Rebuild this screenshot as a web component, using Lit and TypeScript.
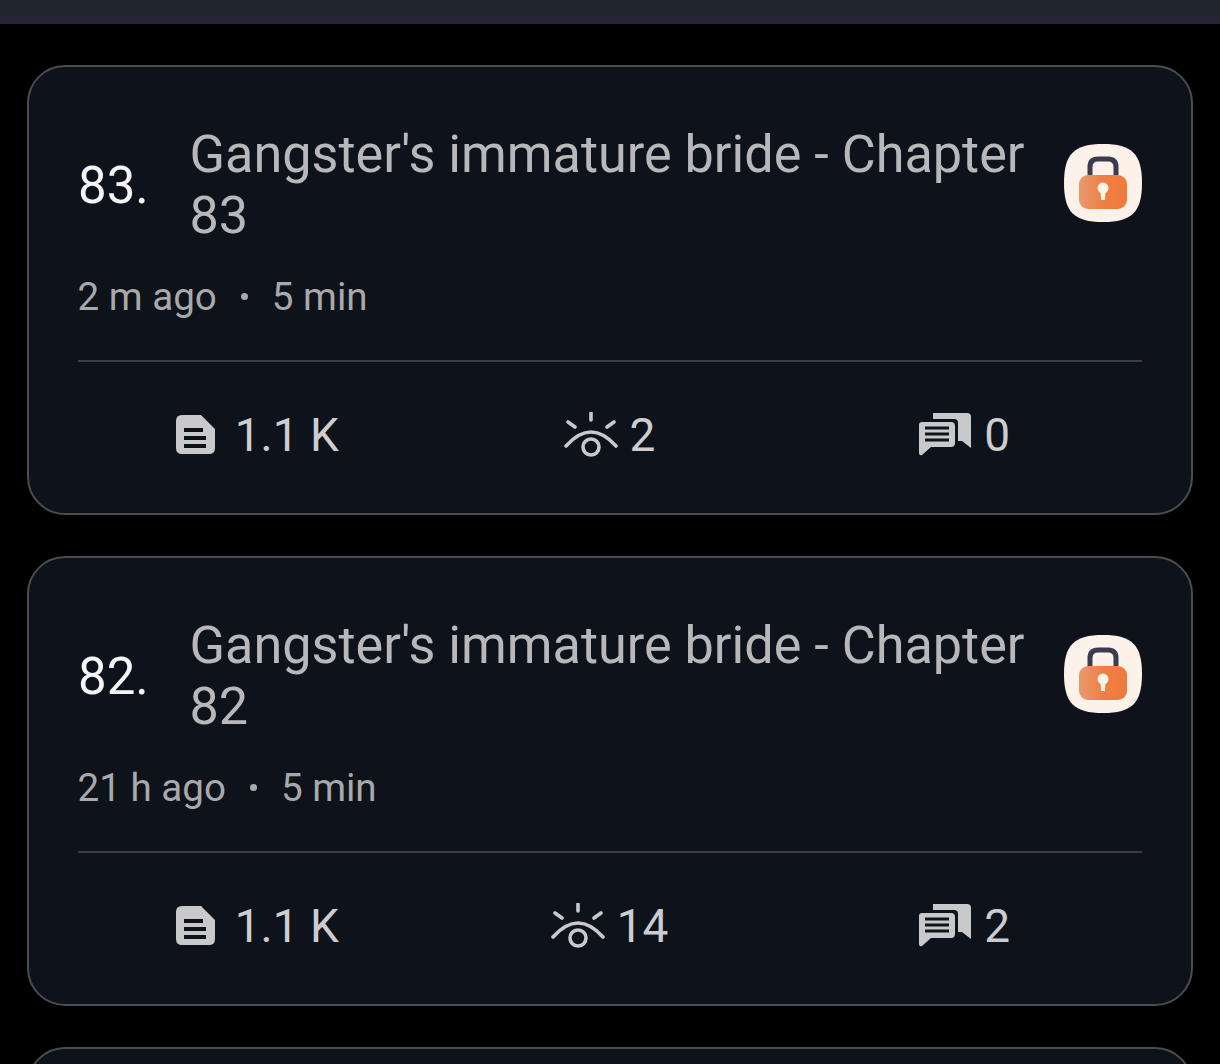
import { LitElement, html, css, svg } from "lit";
import { customElement } from "lit/decorators.js";

const chapters = [
  { n: 83, meta: "2 m ago", views: "2", comments: "0" },
  { n: 82, meta: "21 h ago", views: "14", comments: "2" },
];

const pageIcon = svg`<path fill="#c9c9cb" fill-rule="evenodd" d="M7 0H26L40 14V33Q40 39 34 39H7Q1 39 1 33V6Q1 0 7 0ZM9 13V17H28V13ZM9 21V25H31V21ZM9 29V33H31V29Z"/>`;

const eyeIcon = svg`<g fill="none" stroke="#c9c9cb" stroke-width="3.6" stroke-linecap="round">
  <path d="M2 34Q27 6 52 34" /><circle cx="27" cy="35" r="8"/>
  <path d="M27 1V8M4 10L11 15M50 10L43 15"/></g>`;

const commentIcon = svg`<path fill="#c9c9cb" d="M15 0H49Q53 0 53 4V35L44 28H40V10Q40 6 36 6H15V4Q15 0 15 0Z"/>
  <path fill="#c9c9cb" d="M4 9H33Q37 9 37 13V30Q37 34 33 34H13L4 42Q1 43 1 40V12Q1 9 4 9Z"/>
  <path stroke="#101319" stroke-width="3" d="M7 15H31M7 21H31M7 27H31"/>`;

@customElement("app-root")
export class AppRoot extends LitElement {
  static styles = css`
    :host { display: block; width: 1220px; height: 1064px; overflow: hidden; background: #000; font-family: Roboto, "Liberation Sans", sans-serif; }
    .top { height: 16px; background: #1e2630; border-bottom: 8px solid #272338; }
    .list { display: flex; flex-direction: column; gap: 41px; padding: 41px 27px 0; }
    .card { box-sizing: border-box; height: 450px; flex: none; border: 2.5px solid #4a4c50; border-radius: 38px; background: #0e121a; padding: 58px 49.5px 0 48.5px; }
    .head { display: flex; align-items: center; }
    .num { width: 111.5px; flex: none; margin-left: .5px; font-size: 51px; line-height: 61px; color: #f5f5f5; }
    .title { flex: 1; font-size: 52.2px; line-height: 60.5px; color: #b8b8ba; }
    .lock { width: 78px; height: 78px; flex: none; margin-left: 30px; margin-top: -6px; }
    .meta { display: flex; align-items: center; margin-top: 20.5px; font-size: 38.6px; line-height: 60px; color: #a9a9ab; }
    .dot { width: 7px; height: 7px; border-radius: 50%; background: #a9a9ab; margin: 0 24px 0 24px; }
    .rule { height: 2.5px; background: #3d3d41; margin-top: 33px; }
    .stats { display: grid; grid-template-columns: repeat(3, 1fr); margin-top: 44px; }
    .stat { display: flex; align-items: center; justify-content: center; gap: 12px; font-size: 46px; line-height: 58px; color: #cdcdcf; }
    .page { width: 41px; height: 40px; margin-left: 4px; margin-right: 7px; }
    .eye { width: 54px; height: 46px; }
    .bubble { width: 54px; height: 44px; }
  `;

  private lock(id: number) {
    return html`<svg class="lock" viewBox="0 0 78 78">
      <defs><linearGradient id="g${id}" x1="0" x2="1" y1="0" y2="0"><stop offset="0" stop-color="#e89a70"/><stop offset=".5" stop-color="#ef7f45"/><stop offset="1" stop-color="#ef7a3c"/></linearGradient></defs>
      <path fill="#fdf2ea" d="M39 0C68 0 78 10 78 39S68 78 39 78 0 68 0 39 10 0 39 0Z"/>
      <path fill="none" stroke="#3a3d52" stroke-width="5" d="M26 32V23Q26 15 34 15H44Q52 15 52 23V32"/>
      <rect x="15" y="31" width="48" height="34" rx="9" fill="url(#g${id})"/>
      <circle cx="39" cy="44" r="5.5" fill="#fff4e6"/><path d="M36.5 46H41.5L41 56H37Z" fill="#fff4e6"/>
    </svg>`;
  }

  render() {
    return html`<div class="top"></div>
      <div class="list">
        ${chapters.map((c) => html`<section class="card">
          <div class="head">
            <div class="num">${c.n}.</div>
            <div class="title">Gangster's immature bride - Chapter ${c.n}</div>
            ${this.lock(c.n)}
          </div>
          <div class="meta"><span>${c.meta}</span><span class="dot"></span><span>5 min</span></div>
          <div class="rule"></div>
          <div class="stats">
            <div class="stat"><svg class="page" viewBox="0 0 41 40">${pageIcon}</svg>1.1 K</div>
            <div class="stat"><svg class="eye" viewBox="0 0 54 46">${eyeIcon}</svg>${c.views}</div>
            <div class="stat"><svg class="bubble" viewBox="0 0 54 44">${commentIcon}</svg>${c.comments}</div>
          </div>
        </section>`)}
        <section class="card"></section>
      </div>`;
  }
}
